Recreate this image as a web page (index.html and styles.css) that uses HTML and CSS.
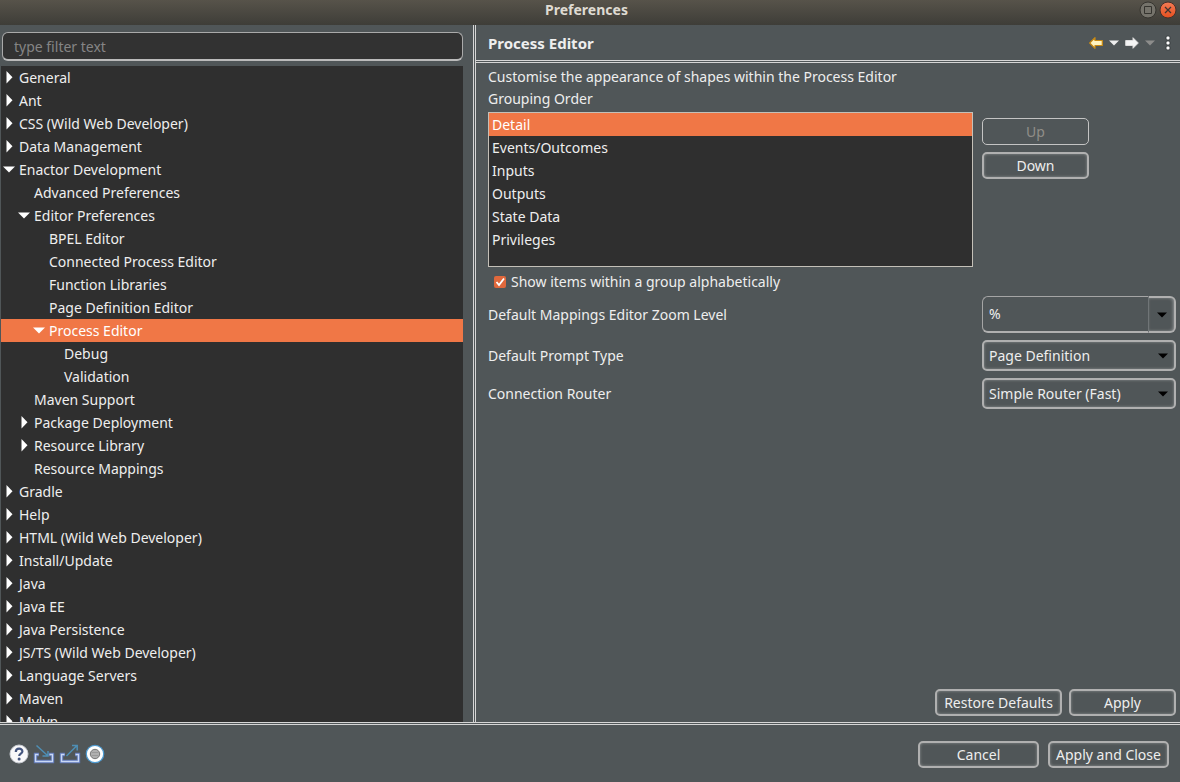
FILE: index.html
```html
<!DOCTYPE html>
<html lang="en">
<head>
<meta charset="utf-8">
<title>Preferences</title>
<link rel="stylesheet" href="styles.css">
</head>
<body>
<svg width="0" height="0" class="defs" aria-hidden="true">
  <symbol id="closed" viewBox="0 0 16 23"><path d="M5.500 5v12.500l6-6.250z" fill="#fff"/></symbol>
  <symbol id="open" viewBox="0 0 16 23"><path d="M2 8.500h12l-6 6z" fill="#fff"/></symbol>
  <symbol id="drop" viewBox="0 0 10 6"><path d="M0 .5h10L5 5.500z" fill="currentColor"/></symbol>
</svg>
<header class="titlebar">
  <h1 class="window-title">Preferences</h1>
  <div class="window-controls">
    <button class="window-button" aria-label="Maximise"><svg width="18" height="18" viewBox="0 0 18 18"><circle cx="9" cy="9" r="8" fill="#75736b" stroke="#35342f"/><path d="M5.500 5.500h7v7h-7z" fill="none" stroke="#35342f"/></svg></button>
    <button class="window-button" aria-label="Close"><svg width="18" height="18" viewBox="0 0 18 18"><defs><linearGradient id="red" x2="0" y2="1"><stop stop-color="#f37b55"/><stop offset="1" stop-color="#e7501f"/></linearGradient></defs><circle cx="9" cy="9" r="8" fill="url(#red)" stroke="#45302a"/><path d="M6 6l6 6M12 6l-6 6" stroke="#403530" stroke-width="1.300"/></svg></button>
  </div>
</header>
<div class="workspace">
  <nav class="sidebar">
    <input class="filter" type="text" placeholder="type filter text" aria-label="Filter preferences">
    <ul class="tree" role="tree">
      <li class="node" role="treeitem"><svg class="twisty"><use href="#closed"/></svg>General</li>
      <li class="node" role="treeitem"><svg class="twisty"><use href="#closed"/></svg>Ant</li>
      <li class="node" role="treeitem"><svg class="twisty"><use href="#closed"/></svg>CSS (Wild Web Developer)</li>
      <li class="node" role="treeitem"><svg class="twisty"><use href="#closed"/></svg>Data Management</li>
      <li class="node" role="treeitem"><svg class="twisty"><use href="#open"/></svg>Enactor Development</li>
      <li class="node level-2" role="treeitem"><svg class="twisty"></svg>Advanced Preferences</li>
      <li class="node level-2" role="treeitem"><svg class="twisty"><use href="#open"/></svg>Editor Preferences</li>
      <li class="node level-3" role="treeitem"><svg class="twisty"></svg>BPEL Editor</li>
      <li class="node level-3" role="treeitem"><svg class="twisty"></svg>Connected Process Editor</li>
      <li class="node level-3" role="treeitem"><svg class="twisty"></svg>Function Libraries</li>
      <li class="node level-3" role="treeitem"><svg class="twisty"></svg>Page Definition Editor</li>
      <li class="node level-3 selected" role="treeitem" aria-selected="true"><svg class="twisty"><use href="#open"/></svg>Process Editor</li>
      <li class="node level-4" role="treeitem"><svg class="twisty"></svg>Debug</li>
      <li class="node level-4" role="treeitem"><svg class="twisty"></svg>Validation</li>
      <li class="node level-2" role="treeitem"><svg class="twisty"></svg>Maven Support</li>
      <li class="node level-2" role="treeitem"><svg class="twisty"><use href="#closed"/></svg>Package Deployment</li>
      <li class="node level-2" role="treeitem"><svg class="twisty"><use href="#closed"/></svg>Resource Library</li>
      <li class="node level-2" role="treeitem"><svg class="twisty"></svg>Resource Mappings</li>
      <li class="node" role="treeitem"><svg class="twisty"><use href="#closed"/></svg>Gradle</li>
      <li class="node" role="treeitem"><svg class="twisty"><use href="#closed"/></svg>Help</li>
      <li class="node" role="treeitem"><svg class="twisty"><use href="#closed"/></svg>HTML (Wild Web Developer)</li>
      <li class="node" role="treeitem"><svg class="twisty"><use href="#closed"/></svg>Install/Update</li>
      <li class="node" role="treeitem"><svg class="twisty"><use href="#closed"/></svg>Java</li>
      <li class="node" role="treeitem"><svg class="twisty"><use href="#closed"/></svg>Java EE</li>
      <li class="node" role="treeitem"><svg class="twisty"><use href="#closed"/></svg>Java Persistence</li>
      <li class="node" role="treeitem"><svg class="twisty"><use href="#closed"/></svg>JS/TS (Wild Web Developer)</li>
      <li class="node" role="treeitem"><svg class="twisty"><use href="#closed"/></svg>Language Servers</li>
      <li class="node" role="treeitem"><svg class="twisty"><use href="#closed"/></svg>Maven</li>
      <li class="node" role="treeitem"><svg class="twisty"><use href="#closed"/></svg>Mylyn</li>
    </ul>
  </nav>
  <main class="page">
    <header class="page-header">
      <h2 class="page-title">Process Editor</h2>
      <div class="history">
        <button class="tool" aria-label="Back"><svg width="14" height="12" viewBox="0 0 14 12"><path d="M.7 6L6 .7V3.500h7.300v5H6v2.800z" fill="#fff3c0" stroke="#c98a12" stroke-width="1.200" stroke-linejoin="round"/></svg></button>
        <button class="tool" aria-label="Back history"><svg width="10" height="6"><use href="#drop"/></svg></button>
        <button class="tool" aria-label="Forward"><svg width="14" height="12" viewBox="0 0 14 12"><path d="M13.300 6L8 .7V3.500H.7v5H8v2.800z" fill="#f4f4f4" stroke="#dcdcdc" stroke-linejoin="round"/></svg></button>
        <button class="tool dim" aria-label="Forward history"><svg width="10" height="6"><use href="#drop"/></svg></button>
        <button class="tool menu" aria-label="View menu"><svg width="6" height="16" viewBox="0 0 6 16"><g fill="#fff" stroke="#33383a"><circle cx="3" cy="3" r="2.200"/><circle cx="3" cy="8" r="2.200"/><circle cx="3" cy="13" r="2.200"/></g></svg></button>
      </div>
    </header>
    <form class="settings">
      <p class="text">Customise the appearance of shapes within the Process Editor</p>
      <label class="text" for="order">Grouping Order</label>
      <div class="columns">
        <select class="order" id="order" size="6">
          <option selected>Detail</option><option>Events/Outcomes</option><option>Inputs</option><option>Outputs</option><option>State Data</option><option>Privileges</option>
        </select>
        <div class="order-buttons">
          <button class="button" type="button" disabled>Up</button>
          <button class="button" type="button">Down</button>
        </div>
      </div>
      <label class="check"><input class="check-box" type="checkbox" checked><svg class="check-mark" width="12" height="12" viewBox="0 0 12 12"><path d="M2.500 6l2.500 3 5-6.500" fill="none" stroke="#fff" stroke-width="1.800"/></svg>Show items within a group alphabetically</label>
      <div class="columns field">
        <label for="zoom">Default Mappings Editor Zoom Level</label>
        <div class="combo"><input class="combo-text" id="zoom" type="text" value="%"><button class="combo-button" type="button" aria-label="Show zoom levels"><svg width="10" height="6"><use href="#drop"/></svg></button></div>
      </div>
      <div class="columns field">
        <label for="prompt">Default Prompt Type</label>
        <div class="picker"><select class="picker-select" id="prompt"><option>Page Definition</option></select><svg class="picker-arrow" width="10" height="6"><use href="#drop"/></svg></div>
      </div>
      <div class="columns field">
        <label for="router">Connection Router</label>
        <div class="picker"><select class="picker-select" id="router"><option>Simple Router (Fast)</option></select><svg class="picker-arrow" width="10" height="6"><use href="#drop"/></svg></div>
      </div>
      <div class="page-actions">
        <button class="button wide" type="button">Restore Defaults</button>
        <button class="button" type="button">Apply</button>
      </div>
    </form>
  </main>
</div>
<footer class="footer">
  <div class="footer-tools">
    <button class="tool" aria-label="Help"><svg width="20" height="20" viewBox="0 0 20 20"><circle cx="10" cy="10" r="9" fill="#f8f8fa" stroke="#c9ccd3"/><path d="M6.800 8c0-4.500 6.600-4.200 6.600-.5 0 2.200-3.200 2.200-3.200 4.600" fill="none" stroke="#44557f" stroke-width="2.200"/><circle cx="10.100" cy="15" r="1.500" fill="#44557f"/></svg></button>
    <button class="tool" aria-label="Import"><svg width="22" height="20" viewBox="0 0 22 20"><path d="M6 10.500H2.500v7h17v-7H16" fill="none" stroke="#5f79b8" stroke-width="3.400"/><path d="M5.500 10.500h-3v7h17v-7h-3" fill="none" stroke="#c9d8f5" stroke-width="1.400"/><path d="M3.500 1.500l11 10M15 7v5H9.500" fill="none" stroke="#4e8eb4" stroke-width="1.500"/></svg></button>
    <button class="tool" aria-label="Export"><svg width="22" height="20" viewBox="0 0 22 20"><path d="M6 10.500H2.500v7h17v-7H16" fill="none" stroke="#5f79b8" stroke-width="3.400"/><path d="M5.500 10.500h-3v7h17v-7h-3" fill="none" stroke="#c9d8f5" stroke-width="1.400"/><path d="M7.500 12L18 1.500M13 1.500h5.200v5" fill="none" stroke="#4e8eb4" stroke-width="1.500"/></svg></button>
    <button class="tool" aria-label="Record"><svg width="20" height="20" viewBox="0 0 20 20"><circle cx="10" cy="10" r="8.700" fill="#fff" stroke="#4d9ad0" stroke-width="1.200"/><circle cx="10" cy="10" r="4.700" fill="#b0b0b0" stroke="#777"/><path d="M6.500 8.500h7M6.500 11.500h7" stroke="#9a9a9a"/></svg></button>
  </div>
  <div class="footer-actions">
    <button class="button footer-button">Cancel</button>
    <button class="button footer-button">Apply and Close</button>
  </div>
</footer>
</body>
</html>
```
FILE: styles.css
```css
* { box-sizing: border-box; }

body {
  display: flex;
  flex-direction: column;
  height: 100vh;
  margin: 0;
  overflow: hidden;
  background: #505658;
  color: #eee;
  font: 14px/22px "Noto Sans", "Open Sans", sans-serif;
}

button, input, select { margin: 0; color: inherit; font: inherit; }
h1, h2, p, ul { margin: 0; padding: 0; }
svg { display: block; }
.defs { display: none; }

.titlebar {
  display: grid;
  grid-template-columns: 1fr auto 1fr;
  align-items: center;
  height: 25px;
  padding: 0 3px 5px 0;
  background: linear-gradient(#57534a, #3e3d38);
  color: #dfdbd2;
  flex: none;
}
.window-title { grid-column: 2; padding-right: 4px; font-size: 14px; line-height: 20px; }
.window-controls { display: flex; justify-content: flex-end; gap: 2px; }
.window-button, .tool { padding: 0; border: 0; background: none; }

.workspace { display: flex; flex: 1; min-height: 0; }
.sidebar {
  display: flex;
  flex-direction: column;
  flex: 0 0 476px;
  min-height: 0;
  padding: 7px 10px 0 1px;
  border-right: 3px double #d5d5d5;
}
.filter {
  height: 29px;
  margin: 0 0 5px 1px;
  padding: 0 11px;
  border: 1px solid #aaa;
  border-bottom: 2px solid #bbb;
  border-radius: 6px;
  background: #323232;
}
.filter::placeholder { color: #858585; opacity: 1; }
.tree { flex: 1; min-height: 0; overflow: hidden; background: #2f2f2f; list-style: none; }
.node { display: flex; gap: 2px; height: 23px; line-height: 23px; white-space: nowrap; }
.twisty { width: 16px; height: 23px; flex: none; }
.level-2 { padding-left: 15px; }
.level-3 { padding-left: 30px; }
.level-4 { padding-left: 45px; }
.selected { background: #f07746; color: #fff; }

.page { display: flex; flex-direction: column; flex: 1; min-width: 0; }
.page-header {
  display: flex;
  align-items: center;
  justify-content: space-between;
  height: 38px;
  padding: 0 9px 0 12px;
  border-bottom: 3px double #d5d5d5;
}
.page-title { font-size: 15px; }
.history { display: flex; align-items: center; gap: 6px; }
.dim { color: #8d8d8b; }
.menu { margin-left: 4px; }

.settings { display: flex; flex-direction: column; flex: 1; padding: 3px 4px 6px 12px; }
.text { line-height: 22px; }
.columns { display: grid; grid-template-columns: minmax(0, 1fr) 194px; column-gap: 9px; }
.order {
  height: 155px;
  margin-top: 2px;
  padding: 0;
  border: 1px solid #c4c0b8;
  border-radius: 0;
  outline: 0;
  overflow: hidden;
  background: #2f2f2f;
}
.order option { height: 23px; min-height: 23px; padding: 2px 3px 0; line-height: 21px; }
.order option:checked { background: #f07746 linear-gradient(#f07746, #f07746); color: #fff; }
.order-buttons { display: flex; flex-direction: column; align-items: flex-start; gap: 7px; padding-top: 8px; }

.button {
  min-width: 107px;
  height: 27px;
  padding: 0 5px;
  border: 2px solid #b0b0b0;
  border-radius: 5px;
  background: #505658;
  box-shadow: inset 0 0 3px #8d9091;
  line-height: 22px;
  white-space: nowrap;
}
.button:disabled { border-width: 1px; border-color: #c4c4c4; box-shadow: none; color: #918e88; }
.wide { min-width: 127px; }

.check { display: flex; align-items: center; position: relative; gap: 5px; margin: 4px 0 3px 6px; }
.check-box { appearance: none; width: 12px; height: 12px; border-radius: 2px; background: #e0683c; }
.check-mark { position: absolute; left: 0; pointer-events: none; }
.field { align-items: center; margin-bottom: 7px; }
.combo { display: flex; height: 37px; }
.combo-text {
  flex: 1;
  min-width: 0;
  padding: 0 6px;
  border: 1px solid #a5a5a5;
  border-right-color: #707577;
  border-bottom: 2px solid #b0b0b0;
  border-radius: 6px 0 0 6px;
  background: #505658;
}
.combo-button {
  display: grid;
  place-items: center;
  width: 27px;
  padding: 0;
  border: 2px solid #b0b0b0;
  border-left: 0;
  border-radius: 0 6px 6px 0;
  background: #505658;
  box-shadow: inset -1px 0 3px #8d9091;
  color: #000;
}
.picker { display: grid; position: relative; }
.picker-select {
  appearance: none;
  height: 31px;
  padding: 0 24px 0 5px;
  border: 2px solid #b0b0b0;
  border-radius: 5px;
  background: #505658;
  box-shadow: inset 0 0 3px #8d9091;
}
.picker-arrow { position: absolute; top: 13px; right: 8px; color: #000; pointer-events: none; }
.page-actions { display: flex; justify-content: flex-end; gap: 7px; margin-top: auto; }

.footer {
  display: flex;
  align-items: center;
  justify-content: space-between;
  flex: none;
  height: 60px;
  padding: 0 11px 0 9px;
  border-top: 3px double #d5d5d5;
}
.footer-tools { display: flex; align-items: center; gap: 4px; }
.footer-actions { display: flex; gap: 9px; padding-top: 2px; }
.footer-button { min-width: 121px; }
```
